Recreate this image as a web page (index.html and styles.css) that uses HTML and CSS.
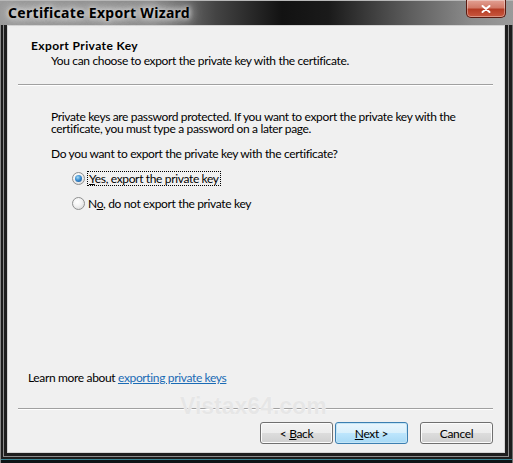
FILE: index.html
```html
<!DOCTYPE html>
<html lang="en">
<head>
    <meta charset="UTF-8">
    <meta name="viewport" content="width=device-width, initial-scale=1.0">
    <title>Certificate Export Wizard</title>
    <link rel="stylesheet" href="styles.css">
</head>
<body>
    <div class="window">
        <div class="titlebar">
            <span class="title">Certificate Export Wizard</span>
            <button class="close" aria-label="Close">
                <svg width="12" height="10" viewBox="0 0 12 10">
                    <path d="M2.5 2 L9.5 8 M9.5 2 L2.5 8" stroke="#fff" stroke-width="2" stroke-linecap="round"/>
                </svg>
            </button>
        </div>

        <div class="client">
            <div class="header">
                <h1>Export Private Key</h1>
                <p>You can choose to export the private key with the certificate.</p>
            </div>
            <div class="sep"></div>

            <div class="body">
                <p class="intro">Private keys are password protected. If you want to export the private key with the certificate, you must type a password on a later page.</p>
                <p class="question">Do you want to export the private key with the certificate?</p>
                <div class="options">
                    <label class="radio">
                        <span class="dot checked"></span>
                        <span class="focus"><u>Y</u>es, export the private key</span>
                    </label>
                    <label class="radio">
                        <span class="dot"></span>
                        <span>N<u>o</u>, do not export the private key</span>
                    </label>
                </div>
            </div>

            <div class="learn">Learn more about <a href="#">exporting private keys</a></div>
            <div class="watermark">Vistax64.com</div>
            <div class="sep"></div>

            <div class="buttons">
                <button class="btn">&lt; <u>B</u>ack</button>
                <button class="btn default"><u>N</u>ext &gt;</button>
                <button class="btn cancel">Cancel</button>
            </div>
        </div>
    </div>
</body>
</html>
```

FILE: styles.css
```css
body {
    margin: 0;
    background: #1c1c1c;
    font-family: Lato, "Noto Sans", sans-serif;
    font-size: 12px;
    letter-spacing: -0.35px;
    color: #000;
}
.window {
    width: 513px;
    height: 463px;
    box-sizing: border-box;
    display: flex;
    flex-direction: column;
    padding: 0 8px 10px 7px;
    background: linear-gradient(to top, #0e1416 0 3px, #3b8796 3px 4px, #1d1d1d 4px);
    box-shadow: inset 1px 0 #8a8a8a, inset -1px 0 #6e6e6e;
    overflow: hidden;
}
.titlebar {
    position: relative;
    z-index: 1;
    height: 25px;
    margin: 0 -8px 0 -7px;
    flex-shrink: 0;
    background: linear-gradient(to right, #9a9a9a 0%, #8a8a8a 30%, #444 42%, #121212 55%, #1a1a1a 64%, #5e5e5e 80%, #8c8c8c 92%, #9a9a9a 100%);
    border-top: 1px solid #b8b8b8;
    box-sizing: border-box;
    display: flex;
    align-items: flex-start;
}
.title {
    margin: 1px 0 0 8px;
    font-family: "Noto Sans", sans-serif;
    font-weight: bold;
    font-size: 14px;
    line-height: 22px;
    letter-spacing: 0.3px;
    color: #000;
    text-shadow: 0 0 5px #e8e8e8, 0 0 10px #ddd, 0 0 14px rgba(220,220,220,0.9);
}
.close {
    margin: -1px 7px 0 auto;
    width: 40px;
    height: 18px;
    padding: 0;
    border: 1px solid #5a1a10;
    border-top: none;
    border-radius: 0 0 5px 5px;
    background: linear-gradient(#e2a093 0%, #d27a68 45%, #b53c25 55%, #c9583f 100%);
    box-shadow: inset 0 0 0 1px rgba(255,255,255,0.35);
    display: flex;
    align-items: center;
    justify-content: center;
}
.client {
    position: relative;
    flex: 1;
    display: flex;
    flex-direction: column;
    background: #f0f0f0;
    border: 1px solid #d4d4d4;
    box-shadow: 0 0 0 3px #1e1e1e, 0 0 0 4px #8c8c8c;
}
.header {
    height: 58px;
    box-sizing: border-box;
    padding: 12px 0 0 23px;
}
h1 {
    margin: 0;
    font-size: 12px;
    line-height: 15px;
    font-weight: bold;
    letter-spacing: 0.4px;
}
.header p {
    margin: 0 0 0 20px;
    line-height: 15px;
}
.sep {
    margin: 0 11px 0 10px;
    border-top: 1px solid #a0a0a0;
    border-bottom: 1px solid #fff;
}
.body {
    flex: 1;
    padding: 25px 20px 0 43px;
}
.intro {
    margin: 0;
    line-height: 12px;
}
.question {
    margin: 13px 0 6px;
    line-height: 12px;
}
.options {
    margin-left: 21px;
}
.radio {
    display: flex;
    align-items: center;
    height: 25px;
}
.dot {
    width: 11px;
    height: 11px;
    border: 1px solid #8e8f8f;
    border-radius: 50%;
    background: radial-gradient(circle at 40% 35%, #fff 0%, #f4f4f4 40%, #d2d2d2 100%);
    margin-right: 3px;
    display: flex;
    align-items: center;
    justify-content: center;
}
.dot.checked::after {
    content: "";
    width: 7px;
    height: 7px;
    border-radius: 50%;
    background: radial-gradient(circle at 40% 35%, #a7dcf5 0%, #3a8dd0 45%, #1a4f8f 100%);
}
.focus {
    outline: 1px dotted #000;
    outline-offset: 0;
    padding: 0 1px;
    line-height: 13px;
}
.learn {
    margin-left: 20px;
    line-height: 15px;
    padding-bottom: 23px;
}
.learn a {
    color: #1a6bb5;
}
.watermark {
    position: absolute;
    left: 172px;
    top: 367px;
    font-family: "Liberation Sans", Arial, sans-serif;
    font-weight: bold;
    font-size: 23px;
    letter-spacing: 0;
    color: #e6e6e6;
    text-shadow: 0 0 1px #fafafa;
}
.buttons {
    display: flex;
    justify-content: flex-end;
    padding: 12px 11px 8px 0;
}
.btn {
    width: 73px;
    height: 22px;
    margin-left: 2px;
    padding: 0;
    font-family: inherit;
    font-size: 12px;
    letter-spacing: inherit;
    color: #000;
    border: 1px solid #707070;
    border-radius: 3px;
    background: linear-gradient(#f3f3f3 0%, #ececec 50%, #dddddd 50%, #cfcfcf 100%);
    box-shadow: inset 0 0 0 1px #fcfcfc;
}
.btn.default {
    border-color: #3c7fb1;
    background: linear-gradient(#eaf6fd 0%, #d9f0fc 50%, #bee6fd 50%, #a7d9f5 100%);
    box-shadow: inset 0 0 0 1px #c4e5f6;
}
.btn.cancel {
    margin-left: 12px;
}
```
